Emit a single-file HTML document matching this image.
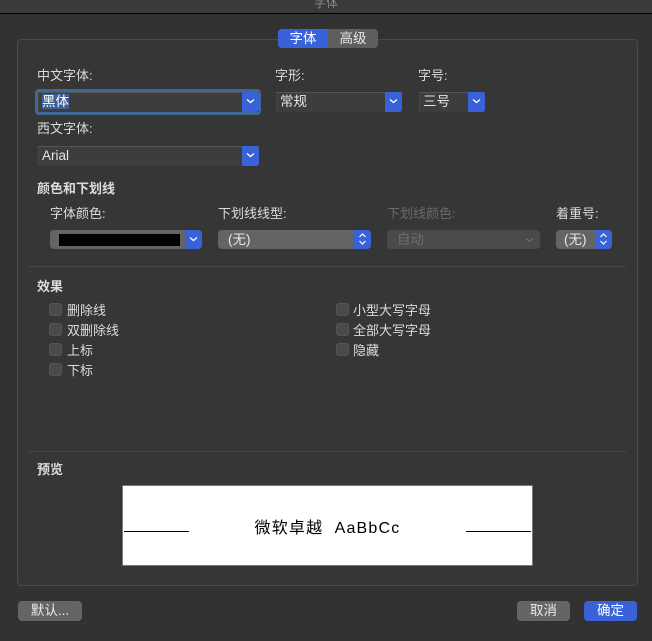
<!DOCTYPE html>
<html><head><meta charset="utf-8"><style>
*{margin:0;padding:0;box-sizing:border-box}
body{width:652px;height:641px;background:#323232;position:relative;overflow:hidden;font-family:"Liberation Sans","Noto Sans CJK SC",sans-serif;font-size:13px;color:#dcdcdc}
.a{position:absolute}
.title{left:0;top:0;width:652px;height:14px;background:#3a3a3a;border-bottom:1px solid #000;text-align:center;color:#8a8a8a;font-size:12px;line-height:6px}
.panel{left:17px;top:39px;width:621px;height:547px;background:#363636;border:1px solid #4a4a4a;border-radius:4px}
.lbl{font-size:13px;color:#dcdcdc;line-height:15px}
.combo{background:#3d3d3d;border-top:1px solid #555;border-left:1px solid #484848;height:20px;color:#e6e6e6;line-height:18px;padding-left:3px;font-size:13.5px}
.ar{position:absolute;right:0;top:-1px;bottom:0;width:17px;background:#3a62d8;border-radius:0 3px 3px 0}
.ar svg{position:absolute;left:4px;top:6px}
.pop{background:#646464;border-radius:4px;height:19px;line-height:19px;padding-left:10px;color:#e8e8e8;font-size:13.5px}
.pop .ar{top:0;border-radius:0 4px 4px 0}
.cb{width:13px;height:13px;background:#4a4a4a;border-radius:3px;border:1px solid #555}
.sep{height:1px;background:#474747}
.btn{background:#656565;border-radius:4px;height:20px;line-height:20px;text-align:center;color:#e8e8e8;font-size:13.5px}
</style></head><body>
<div class="a title">字体</div>
<div class="a panel"></div>
<div class="a" style="left:278px;top:29px;width:100px;height:19px;background:#5e5e5e;border-radius:4px;overflow:hidden">
 <div class="a" style="left:0;top:0;width:50px;height:19px;background:#3a62d8;color:#fff;text-align:center;line-height:19px;font-size:13.5px">字体</div>
 <div class="a" style="left:50px;top:0;width:50px;height:19px;color:#e6e6e6;text-align:center;line-height:19px;font-size:13.5px">高级</div>
</div>

<div class="a lbl" style="left:37px;top:68px">中文字体:</div>
<div class="a lbl" style="left:275px;top:68px">字形:</div>
<div class="a lbl" style="left:418px;top:68px">字号:</div>
<div class="a" style="left:35px;top:89px;width:226px;height:26px;border:3px solid #3f6896;border-radius:4px"></div>
<div class="a combo" style="left:38px;top:92px;width:221px"><span style="background:#3d5f93;color:#fff">黑体</span><div class="ar"><svg width="9" height="6"><path d="M1 1.5L4.5 4.5L8 1.5" stroke="#fff" stroke-width="1.3" fill="none"/></svg></div></div>
<div class="a combo" style="left:276px;top:92px;width:126px">常规<div class="ar"><svg width="9" height="6"><path d="M1 1.5L4.5 4.5L8 1.5" stroke="#fff" stroke-width="1.3" fill="none"/></svg></div></div>
<div class="a combo" style="left:419px;top:92px;width:66px">三号<div class="ar"><svg width="9" height="6"><path d="M1 1.5L4.5 4.5L8 1.5" stroke="#fff" stroke-width="1.3" fill="none"/></svg></div></div>
<div class="a lbl" style="left:37px;top:121px">西文字体:</div>
<div class="a combo" style="left:38px;top:146px;width:221px">Arial<div class="ar"><svg width="9" height="6"><path d="M1 1.5L4.5 4.5L8 1.5" stroke="#fff" stroke-width="1.3" fill="none"/></svg></div></div>

<div class="a lbl" style="left:37px;top:181px;font-weight:bold">颜色和下划线</div>
<div class="a lbl" style="left:50px;top:206px">字体颜色:</div>
<div class="a lbl" style="left:218px;top:206px">下划线线型:</div>
<div class="a lbl" style="left:387px;top:206px;color:#6a6a6a">下划线颜色:</div>
<div class="a lbl" style="left:556px;top:206px">着重号:</div>
<div class="a pop" style="left:50px;top:230px;width:152px"><div class="a" style="left:9px;top:4px;width:121px;height:12px;background:#000"></div><div class="ar"><svg width="9" height="6"><path d="M1 1.5L4.5 4.5L8 1.5" stroke="#fff" stroke-width="1.3" fill="none"/></svg></div></div>
<div class="a pop" style="left:218px;top:230px;width:153px">(无)<div class="ar"><svg width="9" height="14" style="top:2px"><path d="M1.5 5L4.5 2L7.5 5M1.5 9L4.5 12L7.5 9" stroke="#fff" stroke-width="1.2" fill="none"/></svg></div></div>
<div class="a pop" style="left:387px;top:230px;width:153px;background:#4a4a4a;color:#6e6e6e">自动<svg class="a" style="right:6px;top:7px" width="9" height="6"><path d="M1 1.5L4.5 4.5L8 1.5" stroke="#6e6e6e" stroke-width="1.2" fill="none"/></svg></div>
<div class="a pop" style="left:556px;top:230px;width:56px;padding-left:8px">(无)<div class="ar"><svg width="9" height="14" style="top:2px"><path d="M1.5 5L4.5 2L7.5 5M1.5 9L4.5 12L7.5 9" stroke="#fff" stroke-width="1.2" fill="none"/></svg></div></div>

<div class="a sep" style="left:29px;top:266px;width:597px"></div>
<div class="a lbl" style="left:37px;top:279px;font-weight:bold">效果</div>
<div class="a cb" style="left:49px;top:303px"></div><div class="a lbl" style="left:67px;top:303px">删除线</div>
<div class="a cb" style="left:49px;top:323px"></div><div class="a lbl" style="left:67px;top:323px">双删除线</div>
<div class="a cb" style="left:49px;top:343px"></div><div class="a lbl" style="left:67px;top:343px">上标</div>
<div class="a cb" style="left:49px;top:363px"></div><div class="a lbl" style="left:67px;top:363px">下标</div>
<div class="a cb" style="left:336px;top:303px"></div><div class="a lbl" style="left:353px;top:303px">小型大写字母</div>
<div class="a cb" style="left:336px;top:323px"></div><div class="a lbl" style="left:353px;top:323px">全部大写字母</div>
<div class="a cb" style="left:336px;top:343px"></div><div class="a lbl" style="left:353px;top:343px">隐藏</div>

<div class="a sep" style="left:29px;top:451px;width:597px"></div>
<div class="a lbl" style="left:37px;top:462px;font-weight:bold">预览</div>
<div class="a" style="left:122px;top:485px;width:411px;height:81px;background:#fff;border:1px solid #777">
 <div class="a" style="left:1px;top:45px;width:65px;height:1px;background:#000"></div>
 <div class="a" style="right:1px;top:45px;width:65px;height:1px;background:#000"></div>
 <div class="a" style="left:0;width:409px;top:28px;text-align:center;color:#000;font-size:16px;letter-spacing:1.2px">微软卓越&nbsp; AaBbCc</div>
</div>

<div class="a btn" style="left:18px;top:601px;width:64px">默认...</div>
<div class="a btn" style="left:517px;top:601px;width:53px">取消</div>
<div class="a btn" style="left:584px;top:601px;width:53px;background:#3a62d8;color:#fff">确定</div>
</body></html>
